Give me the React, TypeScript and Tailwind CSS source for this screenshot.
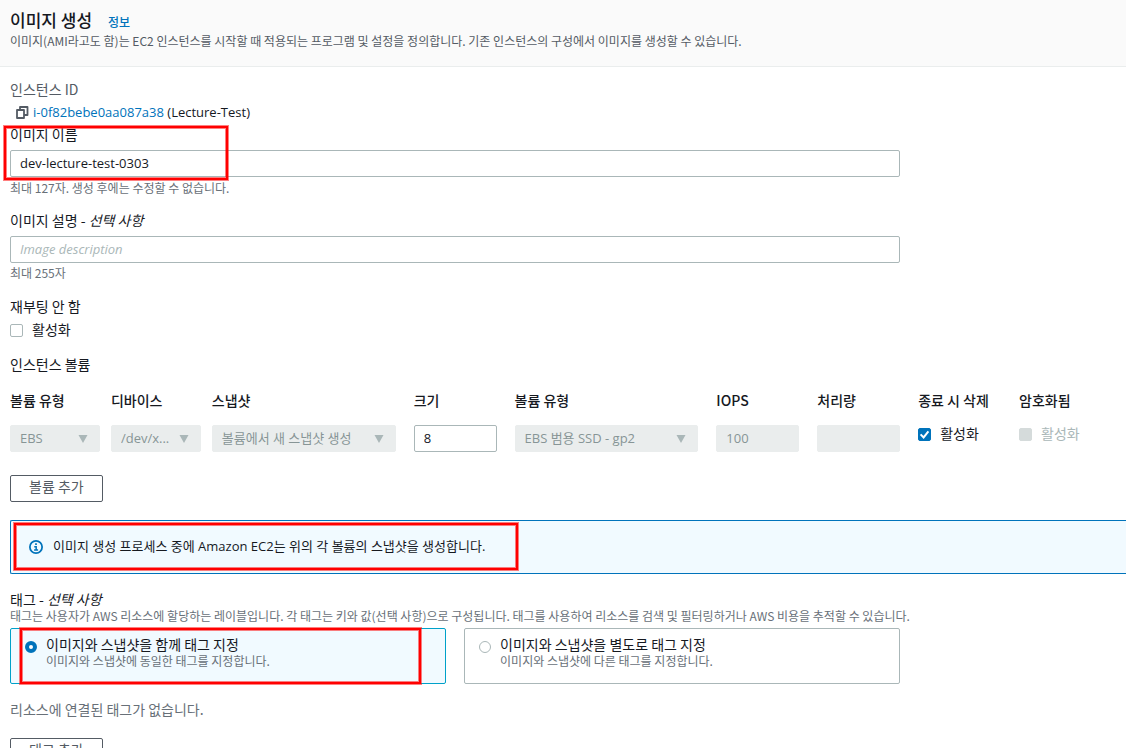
import React, { useState } from 'react';

const latinFont = "font-['Open_Sans','Noto_Sans_CJK_KR',sans-serif] text-[13px]";
const inputClass = `block h-[27px] w-full rounded-xs border border-[#aab7b8] bg-white px-[9px] pb-[2px] text-[#16191f] outline-none placeholder:italic placeholder:text-[#aab7b8] disabled:border-[#eaeded] disabled:bg-[#eaeded] disabled:text-[#879596] ${latinFont}`;
const buttonClass = 'block h-[27px] rounded-xs border border-[#545b64] px-[18px] pb-[5px] text-[#545b64]';

const CopyIcon: React.FC = () => (
    <svg viewBox="0 0 14 14" className="h-[14px] w-[14px] shrink-0" fill="none" stroke="#545b64" strokeWidth="1.8" strokeLinejoin="round">
        <path d="M2 5h7v8H2z" />
        <path d="M5 5V2h7.5v8H9" />
    </svg>
);

const InfoIcon: React.FC = () => (
    <svg viewBox="0 0 16 16" className="h-[14px] w-[14px] shrink-0" fill="none" stroke="#0073bb" strokeWidth="2">
        <circle cx="8" cy="8" r="7" />
        <path d="M8.2 11.5V7.8H6M5.8 11.5h4.6" strokeWidth="1.7" />
        <path d="M8 3.8v2" />
    </svg>
);

// Red box drawn over the part of the form to look at
const Marker: React.FC<{ className: string }> = ({ className }) => (
    <div className={`pointer-events-none absolute border-2 border-[#ff0000] ring-1 ring-[#ff0000]/50 inset-ring-1 inset-ring-[#ff0000]/50 ${className}`} />
);

const Checkbox: React.FC<{ label: string; defaultChecked?: boolean; disabled?: boolean }> = ({ label, defaultChecked, disabled }) => {
    const [checked, setChecked] = useState(!!defaultChecked);

    return (
        <label className={`flex h-[18px] items-center gap-[9px] ${disabled ? 'text-[#aab7b8]' : ''}`}>
            <span className="relative h-[13px] w-[13px]">
                <input
                    type="checkbox"
                    checked={checked}
                    disabled={disabled}
                    onChange={e => setChecked(e.target.checked)}
                    className="block h-[13px] w-[13px] appearance-none rounded-xs border border-[#aab7b8] bg-white checked:border-[#0073bb] checked:bg-[#0073bb] disabled:border-[#d5dbdb] disabled:bg-[#d5dbdb]"
                />
                {checked && (
                    <svg viewBox="0 0 13 13" className="pointer-events-none absolute inset-0" fill="none" stroke="#fff" strokeWidth="2">
                        <path d="M2.6 6.4l3 3 4.8-6" />
                    </svg>
                )}
            </span>
            <span className="pb-[3px]">{label}</span>
        </label>
    );
};

const DisabledSelect: React.FC<{ label: string; value: string }> = ({ label, value }) => (
    <div className="relative">
        <select disabled aria-label={label} className={`${inputClass} appearance-none`}>
            <option>{value}</option>
        </select>
        <svg viewBox="0 0 10 8" className="pointer-events-none absolute top-[10px] right-3 h-2 w-[10px]" fill="#aab7b8">
            <path d="M.5 0h9L5 8z" />
        </svg>
    </div>
);

const tagOptions = [
    { id: 'together', title: '이미지와 스냅샷을 함께 태그 지정', description: '이미지와 스냅샷에 동일한 태그를 지정합니다.' },
    { id: 'separate', title: '이미지와 스냅샷을 별도로 태그 지정', description: '이미지와 스냅샷에 다른 태그를 지정합니다.' },
];

const headers = [
    { text: '볼륨 유형', span: 1 },
    { text: '디바이스', span: 1 },
    { text: '스냅샷', span: 2 },
    { text: '크기', span: 1 },
    { text: '볼륨 유형', span: 2 },
    { text: 'IOPS', span: 1 },
    { text: '처리량', span: 1 },
    { text: '종료 시 삭제', span: 1 },
    { text: '암호화됨', span: 1 },
];

const App: React.FC = () => {
    const [name, setName] = useState('dev-lecture-test-0303');
    const [description, setDescription] = useState('');
    const [size, setSize] = useState('8');
    const [tagMode, setTagMode] = useState('together');

    return (
        <div className="min-h-screen overflow-x-hidden bg-white font-['Noto_Sans_CJK_KR',sans-serif] text-sm leading-5 text-[#16191f]">
            <header className="border-b border-[#eaeded] bg-[#fafafa] px-[10px] pt-2 pb-[17px]">
                <div className="flex items-baseline gap-4">
                    <h1 className="text-[17px] leading-6 font-medium">이미지 생성</h1>
                    <a href="#info" className="text-xs font-medium text-[#0073bb]">정보</a>
                </div>
                <p className="text-xs leading-[17px] text-[#545b64]">
                    이미지(AMI라고도 함)는 EC2 인스턴스를 시작할 때 적용되는 프로그램 및 설정을 정의합니다. 기존 인스턴스의 구성에서 이미지를 생성할 수 있습니다.
                </p>
            </header>

            <main className="pt-3 pl-[10px]">
                <div className="pr-[6px]">
                    <div className="w-9/11 pr-[18px]">
                        <div className="text-[#545b64]">인스턴스 ID</div>
                        <div className="mt-[3px] flex items-center gap-1 pl-[5px]">
                            <button type="button" aria-label="복사"><CopyIcon /></button>
                            <span className={latinFont}><a href="#instance" className="text-[#0073bb]">i-0f82bebe0aa087a38</a> (Lecture-Test)</span>
                        </div>

                        <div className="relative mt-[2px]">
                            <label htmlFor="image-name" className="block">이미지 이름</label>
                            <input id="image-name" type="text" value={name} onChange={e => setName(e.target.value)} className={`${inputClass} mt-[6px]`} />
                            <Marker className="top-[2px] -left-[6px] h-[54px] w-56" />
                        </div>
                        <p className="mt-[3px] text-xs leading-4 text-[#687078]">최대 127자. 생성 후에는 수정할 수 없습니다.</p>

                        <label htmlFor="image-description" className="mt-[14px] block">이미지 설명 - <i>선택 사항</i></label>
                        <input id="image-description" type="text" value={description} placeholder="Image description" onChange={e => setDescription(e.target.value)} className={`${inputClass} mt-[6px]`} />
                        <p className="mt-[2px] text-xs leading-4 text-[#687078]">최대 255자</p>

                        <div className="mt-[15px]">재부팅 안 함</div>
                        <div className="mt-[5px]"><Checkbox label="활성화" /></div>

                        <h2 className="mt-[15px]">인스턴스 볼륨</h2>
                    </div>

                    <table className="mt-4 w-full table-fixed text-left">
                        <thead>
                            <tr>
                                {headers.map((header, i) => (
                                    <th key={i} colSpan={header.span} className="pb-[15px] font-medium whitespace-nowrap">{header.text}</th>
                                ))}
                            </tr>
                        </thead>
                        <tbody>
                            <tr className="align-top">
                                <td className="pr-[11px]"><DisabledSelect label="볼륨 유형" value="EBS" /></td>
                                <td className="pr-[11px]"><DisabledSelect label="디바이스" value="/dev/x..." /></td>
                                <td colSpan={2} className="pr-[18px]"><DisabledSelect label="스냅샷" value="볼륨에서 새 스냅샷 생성" /></td>
                                <td className="pr-[18px]"><input aria-label="크기" type="text" value={size} onChange={e => setSize(e.target.value)} className={inputClass} /></td>
                                <td colSpan={2} className="pr-[18px]"><DisabledSelect label="볼륨 유형" value="EBS 범용 SSD - gp2" /></td>
                                <td className="pr-[18px]"><input aria-label="IOPS" type="text" disabled value="100" className={inputClass} /></td>
                                <td className="pr-[18px]"><input aria-label="처리량" type="text" disabled value="" className={inputClass} /></td>
                                <td><Checkbox label="활성화" defaultChecked /></td>
                                <td><Checkbox label="활성화" disabled /></td>
                            </tr>
                        </tbody>
                    </table>

                    <button type="button" className={`${buttonClass} mt-[23px]`}>볼륨 추가</button>
                </div>

                <div className="relative mt-[18px] flex h-[54px] items-center gap-[10px] rounded-l-xs border border-r-0 border-[#0073bb] bg-[#f1faff] pl-[18px]">
                    <InfoIcon />
                    <span className={`pb-[2px] ${latinFont}`}>이미지 생성 프로세스 중에 Amazon EC2는 위의 각 볼륨의 스냅샷을 생성합니다.</span>
                    <Marker className="top-[2px] left-[3px] h-[47px] w-[504px]" />
                </div>

                <div className="pr-[6px]">
                    <div className="w-9/11 pr-[18px]">
                        <h2 className="mt-[15px]">태그 - <i>선택 사항</i></h2>
                        <p className="text-xs leading-[14px] whitespace-nowrap text-[#687078]">
                            태그는 사용자가 AWS 리소스에 할당하는 레이블입니다. 각 태그는 키와 값(선택 사항)으로 구성됩니다. 태그를 사용하여 리소스를 검색 및 필터링하거나 AWS 비용을 추적할 수 있습니다.
                        </p>
                        <div className="relative mt-[5px] grid grid-cols-2 gap-[18px]">
                            {tagOptions.map(option => (
                                <label
                                    key={option.id}
                                    className={`flex h-14 gap-[9px] rounded-xs border pt-[6px] pl-[14px] ${tagMode === option.id ? 'border-[#00a1c9] bg-[#f1faff]' : 'border-[#aab7b8] bg-white'}`}
                                >
                                    <input
                                        type="radio"
                                        name="tag-mode"
                                        checked={tagMode === option.id}
                                        onChange={() => setTagMode(option.id)}
                                        className="mt-[6px] h-3 w-3 shrink-0 appearance-none rounded-full border border-[#aab7b8] bg-white checked:border-4 checked:border-[#0073bb]"
                                    />
                                    <span>
                                        <span className="block leading-[18px]">{option.title}</span>
                                        <span className="block text-xs leading-4 text-[#687078]">{option.description}</span>
                                    </span>
                                </label>
                            ))}
                            <Marker className="top-0 left-[10px] h-14 w-[401px]" />
                        </div>
                        <p className="mt-[15px] text-[#687078]">리소스에 연결된 태그가 없습니다.</p>
                        <button type="button" className={`${buttonClass} mt-[19px]`}>태그 추가</button>
                    </div>
                </div>
            </main>
        </div>
    );
};

export default App;
